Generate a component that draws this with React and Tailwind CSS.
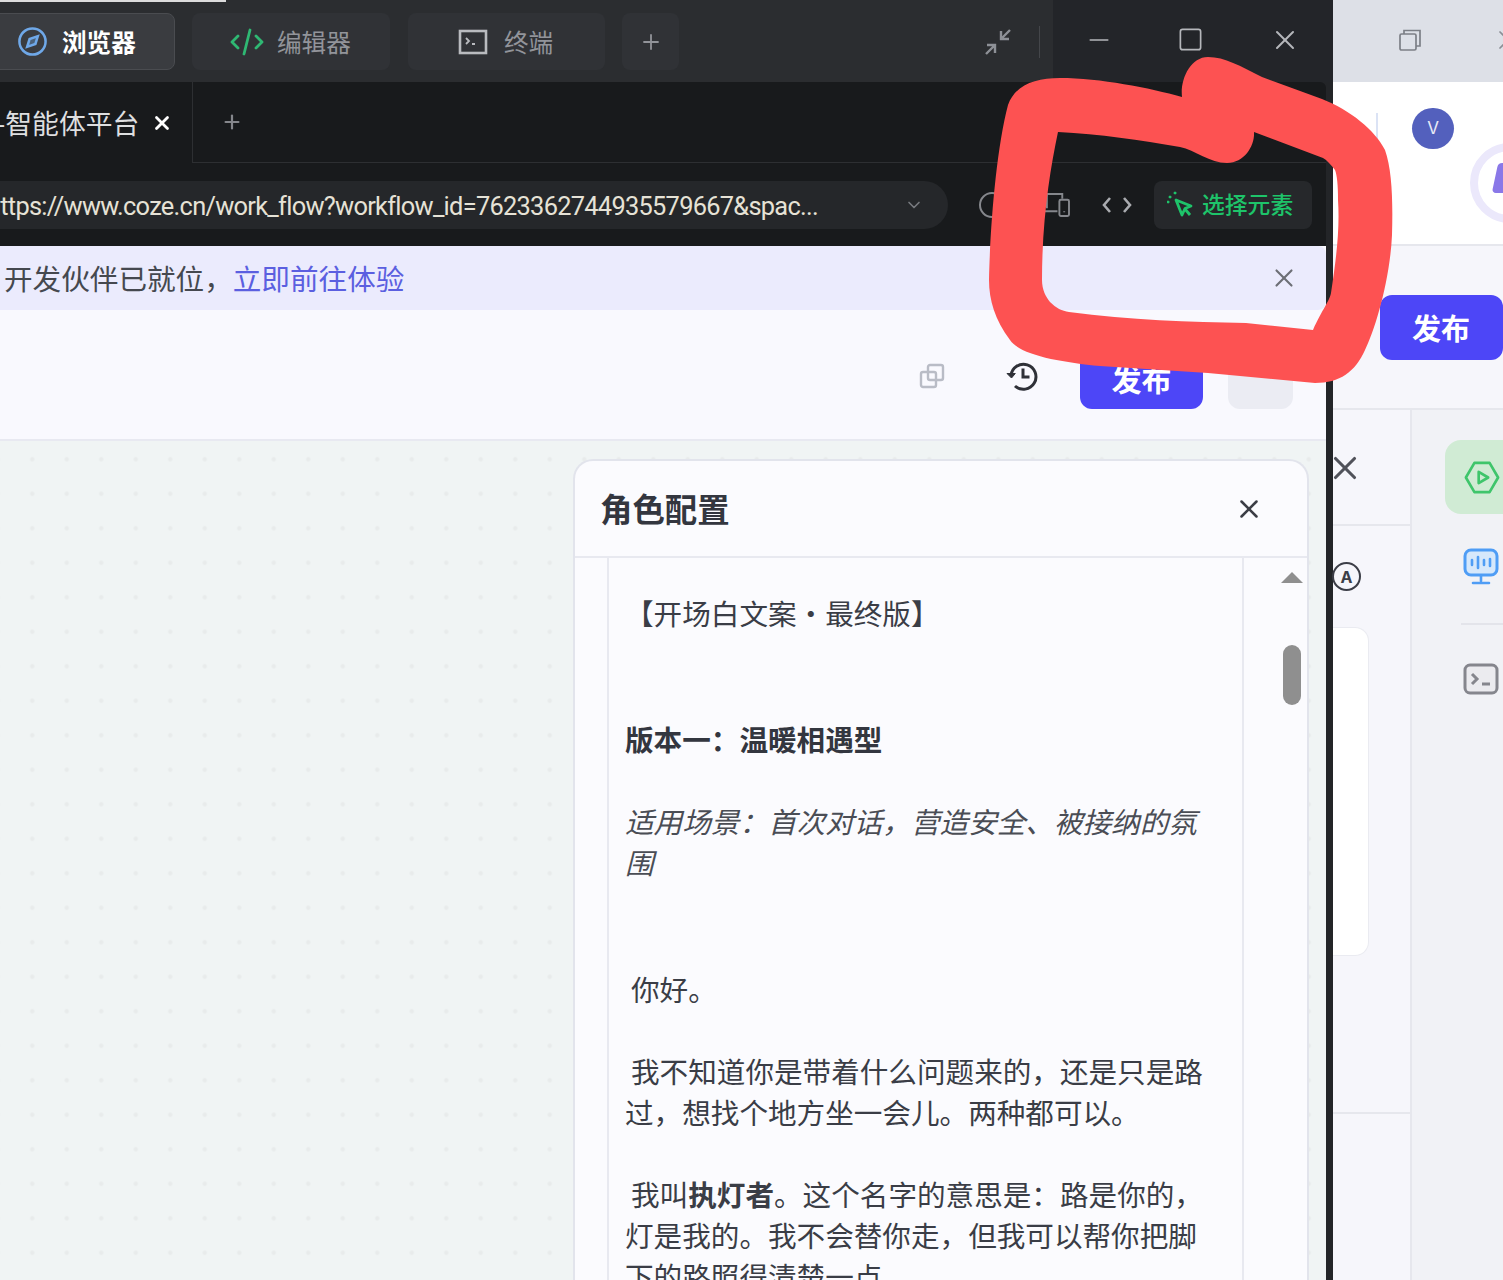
import React from 'react';
import { ChevronDown, Minus, Plus, Square, X } from 'lucide-react';

const cjk = "font-['Noto_Sans_CJK_SC','Noto_Sans',sans-serif]";

const CompassIcon = () => (
  <svg viewBox="0 0 32 32" className="w-[31px] h-[31px] shrink-0" fill="none" stroke="#6fa8e8" strokeWidth="2.6">
    <circle cx="16" cy="16" r="13.5" />
    <path d="M21.5 10.5l-2.5 8-8.5 3 2.5-8z" fill="#6fa8e8" fillOpacity="0.35" />
  </svg>
);

const CodeIcon = () => (
  <svg viewBox="0 0 34 30" className="w-[34px] h-[30px] shrink-0" fill="none" stroke="#2fb873" strokeWidth="2.8" strokeLinecap="round" strokeLinejoin="round">
    <path d="M8 9l-6 6 6 6M26 9l6 6-6 6M20 3l-6 24" />
  </svg>
);

const TerminalIcon = () => (
  <svg viewBox="0 0 30 26" className="w-[30px] h-[26px] shrink-0" fill="none" stroke="#b9bbbf" strokeWidth="2.6">
    <rect x="2" y="2" width="26" height="22" />
    <path d="M8 9l3 3-3 3M14 15h3" strokeWidth="1.8" />
  </svg>
);

const CollapseIcon = () => (
  <svg viewBox="0 0 30 30" className="w-[30px] h-[30px]" fill="none" stroke="#8d9096" strokeWidth="2.4">
    <path d="M27 3l-9 9M18 4v8h8M3 27l9-9M4 18h8v8" />
  </svg>
);

const RestoreIcon = () => (
  <svg viewBox="0 0 24 24" className="w-[24px] h-[24px] shrink-0" fill="none" stroke="#7c7f86" strokeWidth="1.7">
    <rect x="2" y="6" width="16" height="16" rx="1.5" />
    <path d="M6 6V2.5h16V18h-4" />
  </svg>
);

const DevicesIcon = () => (
  <svg viewBox="0 0 28 26" className="w-[27px] h-[25px]" fill="none" stroke="#85878c" strokeWidth="2">
    <path d="M4 17V2h16v5M1 20h14" />
    <rect x="17" y="8" width="10" height="17" rx="1.5" />
    <path d="M22 20v1" />
  </svg>
);

const PickerIcon = () => (
  <svg viewBox="0 0 26 28" className="w-[26px] h-[28px] shrink-0" fill="none" stroke="#1ec46a" strokeWidth="2.8">
    <path d="M9 9l15 6-6 2.5L15 24z" strokeLinejoin="round" />
    <path d="M18 18l5 6" />
    <path d="M3 6l.1.1M8 2l.1.1M1 11l.1.1" strokeLinecap="round" strokeWidth="2.8" />
  </svg>
);

const CopyIcon = () => (
  <svg viewBox="0 0 26 26" className="w-[26px] h-[26px]" fill="none" stroke="#b9bcc6" strokeWidth="2.4">
    <rect x="9" y="2" width="15" height="15" rx="2" />
    <rect x="2" y="9" width="15" height="15" rx="2" />
  </svg>
);

const ClockBackIcon = () => (
  <svg viewBox="0 0 32 32" className="w-[32px] h-[32px]" fill="none" stroke="#2f3138" strokeWidth="3">
    <path d="M5 15.5A12.5 12.5 0 1 1 9 26" />
    <path d="M1 13.5l4.5 4.5 3.8-4.5z" fill="#2f3138" strokeWidth="1" />
    <path d="M17 8.5v8.5h6.5" />
  </svg>
);

const HexPlayIcon = () => (
  <svg viewBox="0 0 38 36" className="w-[36px] h-[35px]" fill="none" stroke="#3fc56b" strokeWidth="2.8" strokeLinejoin="round">
    <path d="M11 2.5h16L36 18l-9 15.5H11L2 18z" />
    <path d="M15.5 12l10 6-10 6z" />
  </svg>
);

const MonitorIcon = () => (
  <svg viewBox="0 0 36 38" className="w-[36px] h-[38px]" fill="none" stroke="#4f9df5" strokeWidth="3" strokeLinecap="round">
    <rect x="2" y="2" width="32" height="25" rx="6" fill="#d6e8fb" />
    <path d="M9 12v5M15 9v11M21 12v5M27 11v7M18 28v5M10 35h16" strokeWidth="2.6" />
  </svg>
);

const ConsoleIcon = () => (
  <svg viewBox="0 0 36 32" className="w-[36px] h-[32px]" fill="#ebebef" stroke="#85868d" strokeWidth="3">
    <rect x="2" y="2" width="32" height="28" rx="5" />
    <path d="M9 11l5 5-5 5M19 21h8" fill="none" />
  </svg>
);

const TopTab = ({ icon, label, active, className }) => (
  <div
    className={`h-[57px] rounded-lg flex items-center ${
      active ? 'bg-[#3a3c40] border border-[#4a4c50] text-white font-bold' : 'bg-[#303236] text-[#92949a]'
    } ${className}`}
  >
    {icon}
    {label && <span className="text-[24.6px]">{label}</span>}
  </div>
);

const RedMark = () => (
  <svg viewBox="0 0 1503 1280" className="absolute inset-0 w-[1503px] h-[1280px] pointer-events-none">
    <path
      fill="#fd5252"
      fillRule="evenodd"
      d="M1208 57C1225 57 1240 66 1262 77L1322 99C1350 110 1375 130 1385 150C1392 170 1393 200 1392 235C1390 280 1375 330 1365 350C1355 372 1340 383 1315 383L1208 373L1100 366C1060 362 1020 355 1010 340C995 320 989 300 989 280C990 230 996 150 1008 105C1015 85 1035 78 1060 78C1100 78 1150 88 1182 97C1180 80 1190 57 1208 57Z
      M1058 132C1050 170 1042 220 1042 280C1042 290 1046 297 1050 302C1056 308 1062 311 1069 312C1130 320 1190 322 1246 323L1313 330C1322 310 1330 300 1331 293C1336 260 1340 230 1338 200C1338 185 1337 175 1335 170C1331 165 1327 160 1323 158L1254 132C1255 145 1245 163 1227 163C1210 163 1195 150 1180 147C1140 140 1100 134 1058 132Z"
    />
  </svg>
);

const App = () => {
  return (
    <div className={`relative flex w-[1503px] h-[1280px] overflow-hidden bg-[#f6f6fb] ${cjk}`}>
      {/* Left window */}
      <div className="w-[1333px] shrink-0 flex flex-col bg-[#232528]">
        {/* Title bar */}
        <div className="relative h-[82px] shrink-0 flex bg-[#2b2d30]">
          <div className="absolute left-0 top-0 w-[226px] h-[2px] bg-[#dcdcdc]" />
          <div className="flex-1 flex items-center pt-[1px]">
            <TopTab active icon={<CompassIcon />} label="浏览器" className="w-[185px] -ml-[10px] pl-[26px] gap-[14px]" />
            <TopTab icon={<CodeIcon />} label="编辑器" className="w-[198px] ml-[17px] pl-[38px] gap-[13px]" />
            <TopTab icon={<TerminalIcon />} label="终端" className="w-[197px] ml-[18px] pl-[50px] gap-[16px]" />
            <TopTab icon={<Plus size={24} strokeWidth={1.8} />} className="w-[57px] ml-[17px] justify-center" />
            <div className="ml-auto flex items-center">
              <CollapseIcon />
              <div className="w-px h-[32px] bg-[#44464a] ml-[26px] mr-[13px]" />
            </div>
          </div>
          <div className="w-[280px] bg-[#232529] flex items-center text-[#b5b7bb] pb-[3px]">
            <Minus size={30} strokeWidth={1.3} className="ml-[31px]" />
            <Square size={27} strokeWidth={1.5} className="ml-[63px]" />
            <X size={32} strokeWidth={1.5} className="ml-[65px]" />
          </div>
        </div>

        {/* Browser area */}
        <div className="w-[1326px] flex-1 flex flex-col min-h-0 bg-[#181a1c] rounded-tr-md overflow-hidden">
          <div className="h-[81px] shrink-0 flex">
            <div className="w-[193px] border-r border-[#2d2f32] flex items-center overflow-hidden text-[#dedfe0]">
              <span className="text-[26.8px] whitespace-nowrap -ml-[4px] pt-[2px]">-智能体平台</span>
              <X size={22} strokeWidth={3} className="ml-[12px] shrink-0 text-white" />
            </div>
            <div className="flex-1 border-b border-[#2d2f32] flex items-center pl-[28px] text-[#85878c]">
              <Plus size={22} strokeWidth={2.4} />
            </div>
          </div>

          <div className="h-[83px] shrink-0 flex items-center">
            <div className="w-[948px] h-[48px] rounded-r-full bg-[#25272a] flex items-center overflow-hidden">
              <span className="font-['Roboto',sans-serif] text-[25.4px] tracking-[-0.72px] text-[#e6e2d6] whitespace-nowrap -ml-[13px] pt-[3px]">
                https://www.coze.cn/work_flow?workflow_id=7623362744935579667&amp;spac...
              </span>
              <ChevronDown size={20} className="ml-auto mr-[24px] shrink-0 text-[#77797e]" />
            </div>
            <div className="ml-[31px] w-[26px] h-[26px] rounded-full border-2 border-[#85878c]" />
            <div className="ml-[38px]"><DevicesIcon /></div>
            <span className="ml-[32px] flex text-[#a9abaf]">
              <svg viewBox="0 0 30 18" className="w-[30px] h-[18px]" fill="none" stroke="currentColor" strokeWidth="2.6">
                <path d="M8 2L2 9l6 7M22 2l6 7-6 7" />
              </svg>
            </span>
            <div className="ml-[22px] w-[158px] h-[48px] rounded-lg bg-[#26282b] flex items-center pl-[13px] gap-[9px] text-[#1ec46a] text-[22.8px] font-medium">
              <PickerIcon />
              <span>选择元素</span>
            </div>
          </div>

          {/* Page */}
          <div className="flex-1 flex flex-col min-h-0 bg-[#f9f9fe]">
            <div className="h-[64px] shrink-0 bg-[#ebebfd] flex items-center pl-[4px] text-[28.6px] text-[#45484f] rounded-tr-lg rounded-br-lg">
              <span>开发伙伴已就位，</span>
              <span className="text-[#5b5fe0]">立即前往体验</span>
              <X size={30} strokeWidth={1.7} className="ml-auto mr-[27px] text-[#6d6f76]" />
            </div>

            <div className="h-[131px] shrink-0 border-b-2 border-[#e8e9f1] flex items-start pt-[33px] justify-end">
              <div className="mt-[20px]"><CopyIcon /></div>
              <div className="ml-[61px] mt-[17px]"><ClockBackIcon /></div>
              <div className="ml-[42px] w-[123px] h-[66px] rounded-xl bg-[#4d46f7] flex items-center justify-center pt-[4px] text-white text-[30px] font-bold">
                发布
              </div>
              <div className="ml-[25px] mr-[33px] w-[65px] h-[66px] rounded-xl bg-[#ebecf3]" />
            </div>

            {/* Canvas */}
            <div className="flex-1 min-h-0 pl-[573px] pr-[17px] pt-[18px] bg-[#f0f4f4] bg-[radial-gradient(circle,#e8ebeb_1.8px,transparent_2.6px)] bg-[size:34.5px_34.5px] bg-[position:15px_1px]">
              <div className="h-[900px] bg-[#fbfbfe] border-2 border-b-0 border-[#e2e4ec] rounded-t-[20px] overflow-hidden">
                <div className="h-[97px] border-b-2 border-[#e8e9f0] flex items-center justify-between pl-[25px] pr-[43px]">
                  <h2 className="text-[32.4px] font-bold text-[#33363f] -mt-[1px]">角色配置</h2>
                  <X size={30} strokeWidth={2} className="text-[#3b3d45]" />
                </div>
                <div className="flex h-[800px]">
                  <div className="w-[34px] border-r-2 border-[#e8e9f0] shrink-0" />
                  <div className="w-[635px] shrink-0 border-r-2 border-[#e8e9f0] pl-[16px] pr-[28px] pt-[34px] text-[28.6px] leading-[41px] text-[#3a3d46]">
                    <p>【开场白文案・最终版】</p>
                    <p className="mt-[85px] font-bold text-[#33363f]">版本一：温暖相遇型</p>
                    <p className="mt-[41px] italic text-[#4a4d55]">适用场景：首次对话，营造安全、被接纳的氛围</p>
                    <p className="mt-[86px] indent-[6px]">你好。</p>
                    <p className="mt-[41px] indent-[6px]">我不知道你是带着什么问题来的，还是只是路过，想找个地方坐一会儿。两种都可以。</p>
                    <p className="mt-[41px] indent-[6px]">
                      我叫<strong className="font-bold">执灯者</strong>。这个名字的意思是：路是你的，灯是我的。我不会替你走，但我可以帮你把脚下的路照得清楚一点
                    </p>
                  </div>
                  <div className="flex-1 flex flex-col items-center pl-[37px] pr-[5px] pt-[14px]">
                    <div className="w-0 h-0 border-l-[11px] border-r-[11px] border-b-[11px] border-l-transparent border-r-transparent border-b-[#8f8f8f]" />
                    <div className="mt-[62px] w-[18px] h-[60px] rounded-full bg-[#8f8f8f]" />
                  </div>
                </div>
              </div>
            </div>
          </div>
        </div>
      </div>

      {/* Right window */}
      <div className="flex-1 flex flex-col min-w-0">
        <div className="h-[82px] shrink-0 bg-[#dde0e7] flex items-center pl-[65px] pb-[3px] overflow-hidden">
          <RestoreIcon />
          <X size={32} strokeWidth={1.3} className="ml-[70px] shrink-0 text-[#8b8e95]" />
        </div>
        <div className="h-[164px] shrink-0 bg-white border-b-2 border-[#e6e7ed] relative overflow-hidden">
          <div className="absolute left-[43px] top-[31px] w-[2px] h-[32px] bg-[#dbe3f5]" />
          <div className="absolute left-[79px] top-[26px] w-[42px] h-[41px] rounded-full bg-[#5360bd] flex items-center justify-center text-[#e8e9f6] text-[17px] font-['Inter',sans-serif]">
            V
          </div>
          <div className="absolute left-[137px] top-[61px] w-[80px] h-[80px] rounded-full border-[8px] border-[#ebe8fb] bg-white">
            <div className="ml-[17px] mt-[12px] w-[20px] h-[30px] bg-[#8a78e8] rounded-sm -skew-x-12" />
          </div>
        </div>
        <div className="h-[164px] shrink-0 bg-[#f6f6fb] border-b-2 border-[#e6e7ed] pl-[47px] pt-[49px]">
          <div className="w-[123px] h-[65px] rounded-xl bg-[#4d46f7] text-white text-[29px] font-bold flex items-center pl-[32px]">
            发布
          </div>
        </div>
        <div className="flex-1 flex min-h-0">
          <div className="w-[79px] shrink-0 border-r-2 border-[#e6e7ed] bg-[#f6f6fb] flex flex-col">
            <div className="h-[116px] shrink-0 border-b-2 border-[#e6e7ed] flex items-start pt-[39px]">
              <X size={38} strokeWidth={2} className="-ml-[7px] text-[#50525a]" />
            </div>
            <div className="pt-[36px] pb-[36px] shrink-0">
              <div className="-ml-[1px] w-[29px] h-[29px] rounded-full border-2 border-[#3c3e47] flex items-center justify-center text-[16px] font-bold text-[#3c3e47] font-['Inter',sans-serif]">
                A
              </div>
            </div>
            <div className="w-[36px] h-[329px] shrink-0 bg-white border border-l-0 border-[#eaebf1] rounded-r-[14px]" />
            <div className="mt-[156px] border-t-2 border-[#e6e7ed]" />
          </div>
          <div className="flex-1 min-w-0 bg-[#f1f2f6] pl-[33px] pt-[30px] flex flex-col">
            <div className="h-[74px] w-[70px] rounded-l-[16px] bg-[#d0ebd4] flex items-center pl-[19px]">
              <HexPlayIcon />
            </div>
            <div className="mt-[34px] pl-[18px]"><MonitorIcon /></div>
            <div className="mt-[37px] ml-[16px] border-t-2 border-[#e3e4ea]" />
            <div className="mt-[38px] pl-[18px]"><ConsoleIcon /></div>
          </div>
        </div>
      </div>

      <RedMark />
    </div>
  );
};

export default App;
